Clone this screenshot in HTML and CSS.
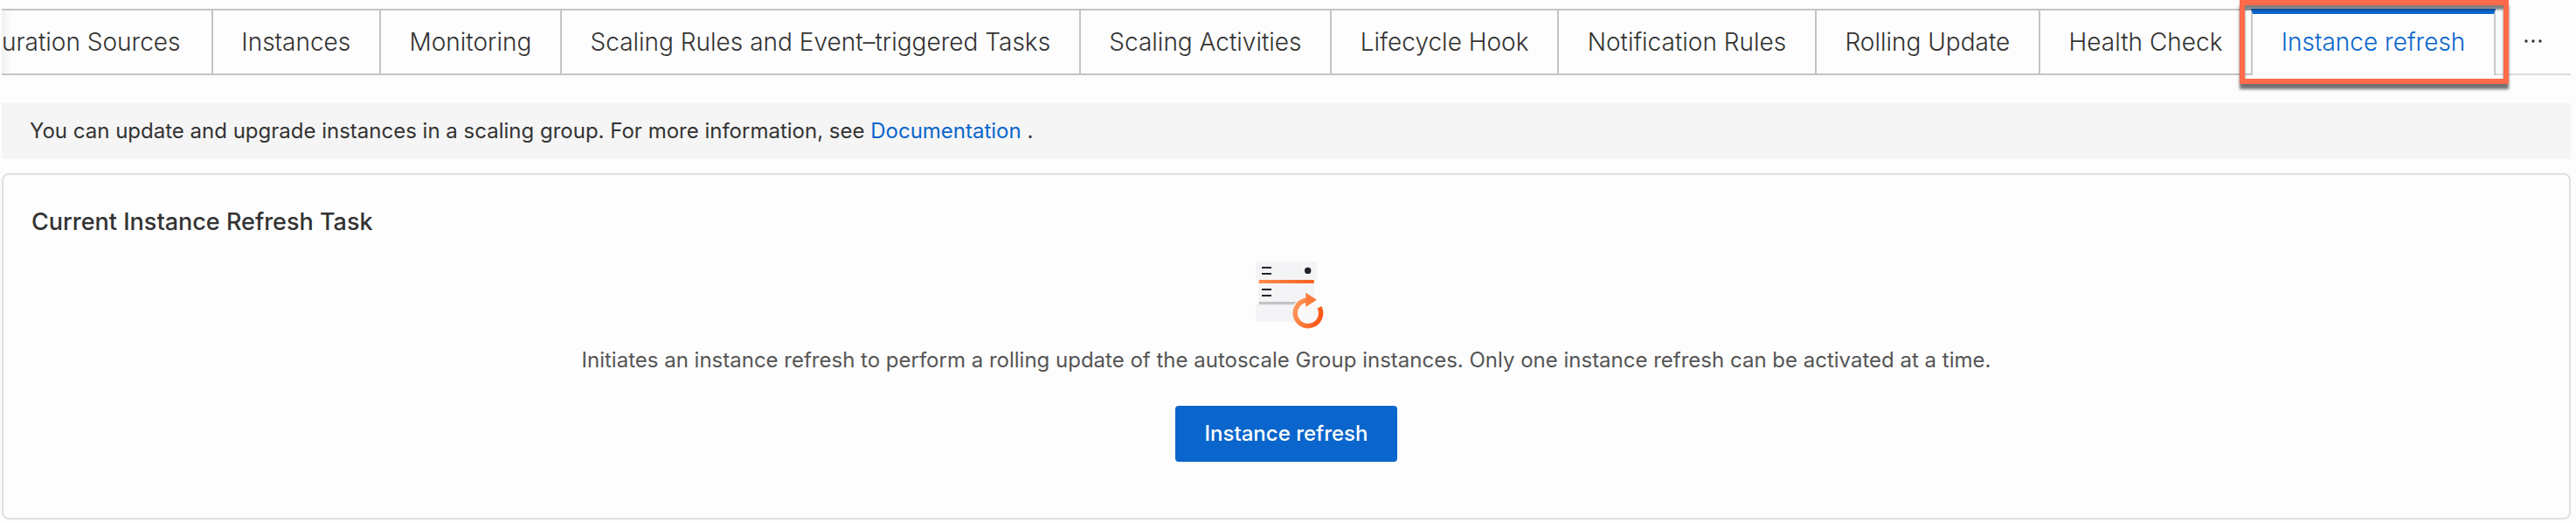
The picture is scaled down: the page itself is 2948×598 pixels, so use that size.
FILE: index.html
```
<!DOCTYPE html>
<html lang="en">
<head>
<meta charset="utf-8">
<title>Instance refresh</title>
<link rel="stylesheet" href="styles.css">
</head>
<body>
<nav class="tabs">
  <div class="tab-list" role="tablist">
    <button class="tab tab-cut" role="tab">uration Sources</button>
    <button class="tab" role="tab">Instances</button>
    <button class="tab" role="tab">Monitoring</button>
    <button class="tab" role="tab">Scaling Rules and Event–triggered Tasks</button>
    <button class="tab" role="tab">Scaling Activities</button>
    <button class="tab" role="tab">Lifecycle Hook</button>
    <button class="tab" role="tab">Notification Rules</button>
    <button class="tab" role="tab">Rolling Update</button>
    <button class="tab" role="tab">Health Check</button>
    <button class="tab tab-active" role="tab" aria-selected="true">Instance refresh<span class="highlight"></span></button>
  </div>
  <button class="more" aria-label="More tabs">
    <svg width="20" height="4" viewBox="0 0 20 4" aria-hidden="true"><circle cx="2" cy="2" r="1.7"/><circle cx="10" cy="2" r="1.7"/><circle cx="18" cy="2" r="1.7"/></svg>
  </button>
</nav>
<main>
  <p class="notice">You can update and upgrade instances in a scaling group. For more information, see <a href="#">Documentation</a> .</p>
  <section class="card">
    <h2 class="card-title">Current Instance Refresh Task</h2>
    <div class="empty">
      <svg class="empty-icon" viewBox="0 0 88 84" aria-hidden="true">
        <defs>
          <linearGradient id="bar" x1="0" x2="1" y1="0" y2="0"><stop offset="0" stop-color="#ff8a4c"/><stop offset="1" stop-color="#f9601c"/></linearGradient>
          <linearGradient id="ring" gradientUnits="userSpaceOnUse" x1="51" x2="86" y1="60" y2="72"><stop offset="0" stop-color="#ff9a5e"/><stop offset="1" stop-color="#fb5410"/></linearGradient>
        </defs>
        <path fill="#f4f4f6" d="M9 7h70v21H9zM12 31h64v23H12zM9 56h64v20H9z"/>
        <path fill="#24262a" d="M16 13h11v2H16zM16 20h11v2H16zM16 38h11v2H16zM16 45h11v2H16z"/>
        <circle cx="68.7" cy="17.4" r="3.7" fill="#202226"/>
        <path fill="url(#bar)" d="M12.700 28h63v4h-63z"/>
        <path fill="#c3c3c5" d="M12.700 53h43l-3 3.300h-40z"/>
        <circle cx="68.700" cy="66" r="13" fill="#f8f8f9"/>
        <path fill="none" stroke="url(#ring)" stroke-width="5.400" d="M67.500 51.300A14.700 14.700 0 1 0 82 59.300"/>
        <path fill="#fd7a3c" d="M66.300 42.700 78.900 50.700 66.300 59z"/>
      </svg>
      <p class="empty-text">Initiates an instance refresh to perform a rolling update of the autoscale Group instances. Only one instance refresh can be activated at a time.</p>
      <button class="primary">Instance refresh</button>
    </div>
  </section>
</main>
</body>
</html>
```
FILE: styles.css
```
* {
  box-sizing: border-box;
}

body {
  margin: 0;
  padding: 10px 6px 4px 2px;
  background: #fdfdfd;
  color: #333;
  font-family: Inter, "Liberation Sans", sans-serif;
  font-size: 24px;
  line-height: 32px;
}

button {
  margin: 0;
  font-family: inherit;
  cursor: pointer;
}

.tabs {
  display: flex;
}

.tab-list {
  display: flex;
  flex: 1;
}

.tab {
  flex: 1 0 auto;
  padding: 18px 30px;
  border: 0 solid #c4c4c4;
  border-width: 2px 2px 2px 0;
  background: transparent;
  color: #333;
  font-size: 28px;
  font-weight: 350;
  line-height: 36px;
  white-space: nowrap;
}

.tab-cut {
  padding-left: 0;
  background: linear-gradient(to right, #f1f1f1, #fdfdfd 12px);
  text-align: left;
}

.tab:nth-last-child(2) {
  border-right: 0;
}

.tab-active {
  position: relative;
  border-width: 6px 2px 0;
  border-color: #0a66cc #c8c8c8;
  padding: 14px 30px 20px;
  color: #0a66cc;
}

.highlight {
  position: absolute;
  inset: -16px -17px -10px -15px;
  border: 6px solid #ff6a4a;
  box-shadow: 0 6px 3px rgba(0, 0, 0, 0.55), inset 0 5px 3px rgba(0, 0, 0, 0.5);
  pointer-events: none;
}

.more {
  display: flex;
  align-items: center;
  justify-content: center;
  width: 86px;
  padding: 0;
  border: 0;
  border-bottom: 2px solid #dedede;
  background: transparent;
  fill: #333;
}

.notice {
  margin: 32px 0 16px;
  padding: 16px 32px;
  background: #f5f5f5;
}

.notice a {
  color: #0a66cc;
  text-decoration: none;
}

.card {
  padding: 36px 32px 64px;
  border: 2px solid #e0e0e0;
  border-radius: 8px;
}

.card-title {
  margin: 0;
  font-size: 27px;
  font-weight: 500;
  line-height: 36px;
}

.empty {
  display: flex;
  flex-direction: column;
  align-items: center;
}

.empty-icon {
  width: 88px;
  height: 84px;
  margin: 20px 0;
}

.empty-text {
  margin: 0 0 36px;
  color: #555;
}

.primary {
  padding: 16px 34px;
  border: 0;
  border-radius: 4px;
  background: #0a66cc;
  color: #fff;
  font-size: 24px;
  font-weight: 500;
  line-height: 32px;
}
```
